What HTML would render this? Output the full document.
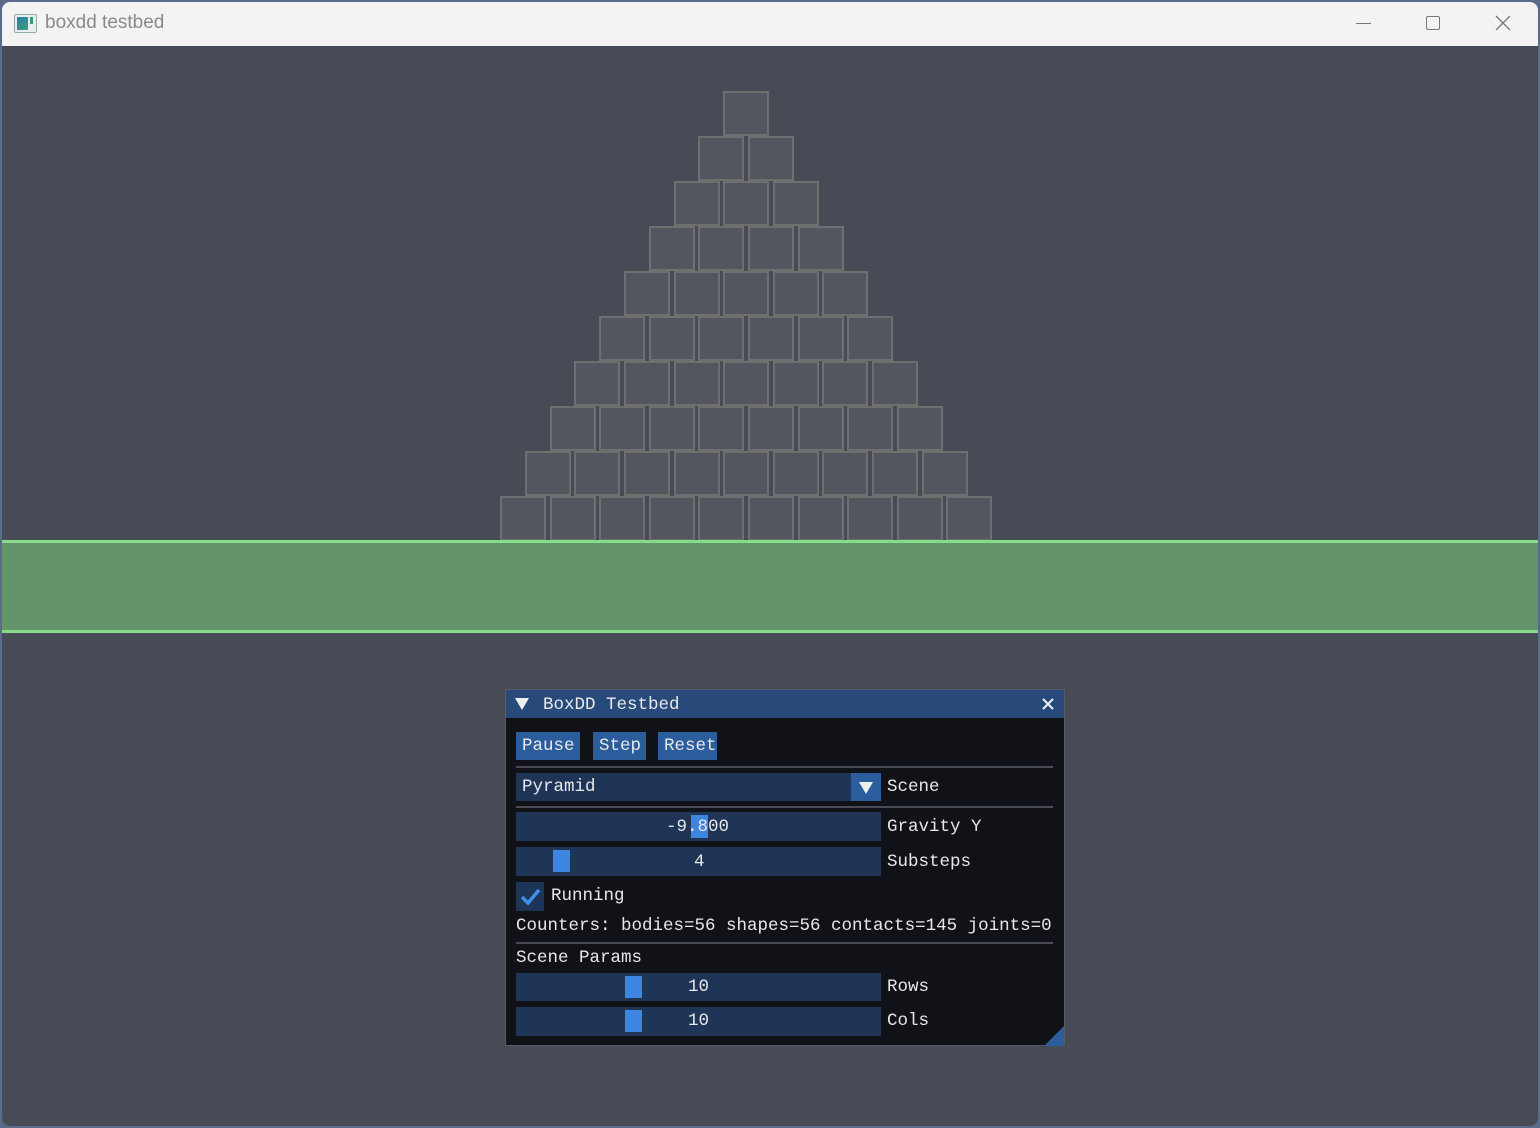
<!DOCTYPE html>
<html><head><meta charset="utf-8"><style>
*{margin:0;padding:0;box-sizing:border-box}
body{width:1540px;height:1128px;background:#5a6a8a;position:relative;overflow:hidden;font-family:"Liberation Mono",monospace}
.a{position:absolute}
#win{left:2px;top:2px;width:1536px;height:1124px;background:#474b55;border-radius:8px;overflow:hidden}
#tb{left:0;top:0;width:1536px;height:44px;background:#f3f3f3}
.box{position:absolute;width:46px;height:45px;background:#53565e;border:2px solid #6f6f70}
.t{color:#e8e8e8;font-size:17.5px;line-height:20px;white-space:pre}
.fr{background:#1e3558}
.btn{background:#2b5d9c}
.grab{background:#3d85e0}
.sep{height:2px;background:#4a4c55}
</style></head><body>
<div id="win" class="a">
 <div id="tb" class="a">
  <div class="a" style="left:12px;top:12px;width:23px;height:19px;border:1px solid #9aa;background:#e8eef0;border-radius:2px"></div>
  <div class="a" style="left:15px;top:15px;width:11px;height:13px;background:linear-gradient(135deg,#2f7fb0,#3aa070)"></div>
  <div class="a" style="left:28px;top:15px;width:3px;height:7px;background:#3a9a70"></div>
  <div class="a" style="left:43px;top:10px;font-family:'Liberation Sans',sans-serif;font-size:19px;color:#8a8a8a">boxdd testbed</div>
  <div class="a" style="left:1354px;top:21px;width:15px;height:1px;background:#777"></div>
  <div class="a" style="left:1424px;top:14px;width:14px;height:14px;border:1.5px solid #777;border-radius:2px"></div>
  <svg class="a" style="left:1493px;top:13px" width="16" height="16"><path d="M1 1L15 15M15 1L1 15" stroke="#777" stroke-width="1.3"/></svg>
 </div>
 <div id="pyr"></div>
 <div class="a" style="left:0;top:538px;width:1536px;height:93px;background:#64956a;border-top:3px solid #86dc88;border-bottom:3px solid #86dc88"></div>

 <div class="a" style="left:503px;top:687px;width:560px;height:357px;background:#101217;border:1px solid #555a66">
  <div class="a" style="left:0;top:0;width:558px;height:28px;background:#284a7a"></div>
  <svg class="a" style="left:8px;top:7px" width="16" height="14"><path d="M1 1H15L8 13Z" fill="#eee"/></svg>
  <div class="a t" style="left:37px;top:5px">BoxDD Testbed</div>
  <svg class="a" style="left:536px;top:8px" width="12" height="12"><path d="M1 1L11 11M11 1L1 11" stroke="#eee" stroke-width="2"/></svg>

  <div class="a btn" style="left:10px;top:42px;width:64px;height:28px"></div><div class="a t" style="left:16px;top:46px">Pause</div>
  <div class="a btn" style="left:87px;top:42px;width:53px;height:28px"></div><div class="a t" style="left:93px;top:46px">Step</div>
  <div class="a btn" style="left:152px;top:42px;width:59px;height:28px"></div><div class="a t" style="left:158px;top:46px">Reset</div>
  <div class="a sep" style="left:10px;top:76px;width:537px"></div>

  <div class="a fr" style="left:10px;top:83px;width:365px;height:28px"></div>
  <div class="a btn" style="left:345px;top:83px;width:30px;height:28px"></div>
  <svg class="a" style="left:352px;top:91px" width="16" height="14"><path d="M1 1H15L8 13Z" fill="#eee"/></svg>
  <div class="a t" style="left:16px;top:87px">Pyramid</div>
  <div class="a t" style="left:381px;top:87px">Scene</div>
  <div class="a sep" style="left:10px;top:116px;width:537px"></div>

  <div class="a fr" style="left:10px;top:122px;width:365px;height:29px"></div>
  <div class="a grab" style="left:185px;top:125px;width:17px;height:23px"></div>
  <div class="a t" style="left:160px;top:127px">-9.800</div>
  <div class="a t" style="left:381px;top:127px">Gravity Y</div>

  <div class="a fr" style="left:10px;top:157px;width:365px;height:29px"></div>
  <div class="a grab" style="left:47px;top:160px;width:17px;height:22px"></div>
  <div class="a t" style="left:188px;top:162px">4</div>
  <div class="a t" style="left:381px;top:162px">Substeps</div>

  <div class="a fr" style="left:10px;top:192px;width:28px;height:29px"></div>
  <svg class="a" style="left:14px;top:197px" width="22" height="20"><path d="M2 10L8 16L19 3" stroke="#3d8fe8" stroke-width="3.5" fill="none"/></svg>
  <div class="a t" style="left:45px;top:196px">Running</div>
  <div class="a t" style="left:10px;top:226px">Counters: bodies=56 shapes=56 contacts=145 joints=0</div>
  <div class="a sep" style="left:10px;top:252px;width:537px"></div>
  <div class="a t" style="left:10px;top:258px">Scene Params</div>

  <div class="a fr" style="left:10px;top:283px;width:365px;height:28px"></div>
  <div class="a grab" style="left:119px;top:286px;width:17px;height:22px"></div>
  <div class="a t" style="left:182px;top:287px">10</div>
  <div class="a t" style="left:381px;top:287px">Rows</div>

  <div class="a fr" style="left:10px;top:317px;width:365px;height:29px"></div>
  <div class="a grab" style="left:119px;top:320px;width:17px;height:22px"></div>
  <div class="a t" style="left:182px;top:321px">10</div>
  <div class="a t" style="left:381px;top:321px">Cols</div>

  <svg class="a" style="left:538px;top:336px" width="20" height="20"><path d="M20 0V20H0Z" fill="#2b5d9c"/></svg>
 </div>
</div>
<script>
var p=document.getElementById('pyr'),h='';
for(var r=0;r<10;r++){var n=10-r,y=494-45*r,x0=498+24.8*r;
for(var i=0;i<n;i++){h+='<div class="box" style="left:'+Math.round(x0+49.6*i)+'px;top:'+y+'px"></div>';}}
p.innerHTML=h;
</script>
</body></html>
